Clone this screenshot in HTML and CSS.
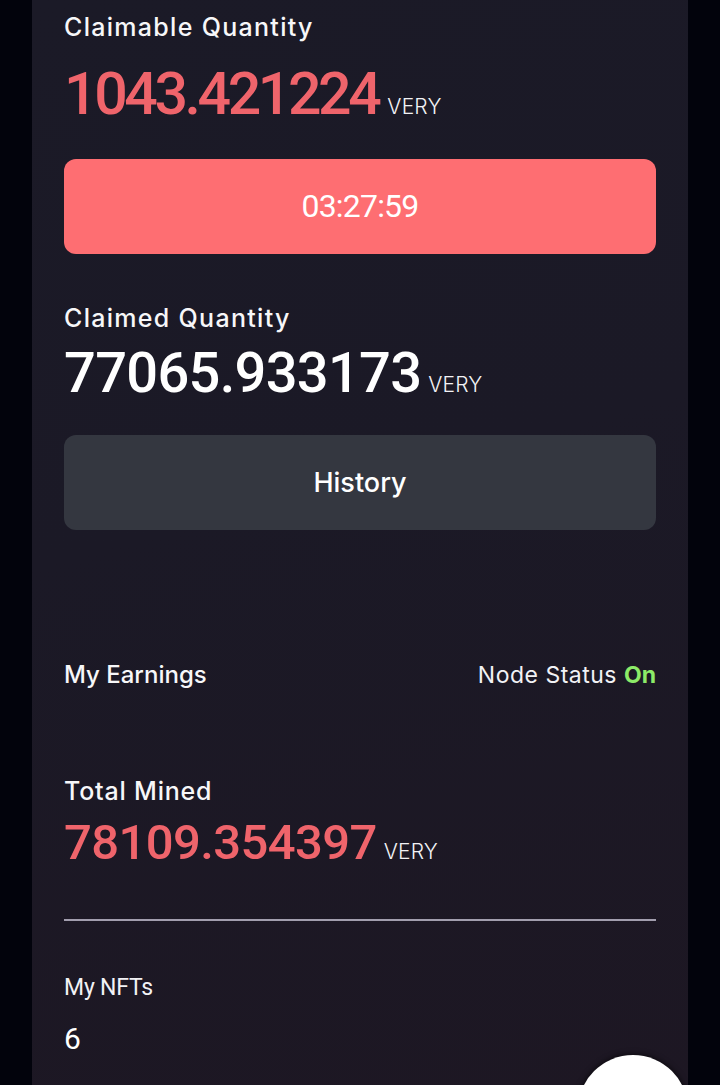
FILE: index.html
```html
<!DOCTYPE html>
<html lang="en">
<head>
<meta charset="utf-8">
<title>Mining</title>
<link rel="stylesheet" href="styles.css">
</head>
<body>
<div class="page">
  <main class="panel">
    <section class="claim">
      <div class="label">Claimable Quantity</div>
      <div class="amount amount-xl red"><span class="num">1043.421224</span><span class="unit">VERY</span></div>
      <button class="btn btn-timer">03:27:59</button>
    </section>

    <section class="claimed">
      <div class="label">Claimed Quantity</div>
      <div class="amount amount-lg white"><span class="num">77065.933173</span><span class="unit">VERY</span></div>
      <button class="btn btn-history">History</button>
    </section>

    <div class="earnings-head">
      <span class="label label-sm">My Earnings</span>
      <span class="status">Node Status <b class="on">On</b></span>
    </div>

    <section class="mined">
      <div class="label label-tight">Total Mined</div>
      <div class="amount amount-md red"><span class="num">78109.354397</span><span class="unit">VERY</span></div>
    </section>

    <hr class="divider">

    <section class="nfts">
      <div class="nft-label">My NFTs</div>
      <div class="nft-count">6</div>
    </section>
  </main>
  <button class="fab" aria-label="menu"></button>
</div>
</body>
</html>
```

FILE: styles.css
```css
* { box-sizing: border-box; }
html, body { margin: 0; padding: 0; }
body {
  background: #02030c;
  color: #ffffff;
  font-family: "Inter", "Liberation Sans", sans-serif;
  height: 1085px;
  overflow: hidden;
}
.page {
  position: relative;
  height: 1085px;
  padding: 0 32px;
  overflow: hidden;
}
.panel {
  height: 1085px;
  background: linear-gradient(165deg, #1b1a27 0%, #1b1926 45%, #1d1723 100%);
  padding: 0 32px;
  display: flex;
  flex-direction: column;
}
.label {
  font-family: "Inter", sans-serif;
  font-weight: 500;
  font-size: 25px;
  line-height: 1;
  letter-spacing: 1.3px;
  color: #f7f7f9;
}
.label-sm { font-size: 24px; letter-spacing: 0; }
.label-tight { letter-spacing: 0.8px; }
.claim { padding-top: 14.6px; display: flex; flex-direction: column; }
.amount {
  display: flex;
  align-items: baseline;
  line-height: 1;
}
.num {
  font-family: "Roboto", sans-serif;
  font-weight: 500;
}
.unit {
  font-family: "Inter", sans-serif;
  font-weight: 300;
  font-size: 21px;
  color: #f2f2f5;
  margin-left: 7px;
  letter-spacing: 0.2px;
}
.red .num { color: #ef646b; }
.white .num { color: #ffffff; }
.amount-xl { margin-top: 24.7px; font-size: 59px; height: 59px; }
.amount-xl .num { letter-spacing: -3.4px; }
.amount-xl .unit { margin-left: 9px; }
.amount-lg { margin-top: 13.4px; font-size: 56px; height: 56px; }
.amount-lg .num { letter-spacing: -0.7px; }
.amount-md { margin-top: 14.5px; font-size: 49px; height: 49px; }
.amount-md .num { letter-spacing: -0.6px; }

.btn {
  display: flex;
  align-items: center;
  justify-content: center;
  width: 100%;
  height: 95px;
  border: none;
  border-radius: 12px;
  color: #ffffff;
  padding: 0;
}
.btn-timer {
  margin-top: 35.7px;
  background: #fe6e72;
  font-family: "Roboto", sans-serif;
  font-weight: 400;
  font-size: 32px;
  letter-spacing: -0.8px;
}
.claimed { margin-top: 52.3px; display: flex; flex-direction: column; }
.btn-history {
  margin-top: 34.5px;
  background: #343740;
  font-family: "Inter", sans-serif;
  font-weight: 500;
  font-size: 27px;
}
.earnings-head {
  margin-top: 133px;
  display: flex;
  justify-content: space-between;
  align-items: baseline;
  line-height: 1;
}
.status {
  font-family: "Inter", sans-serif;
  font-size: 23px;
  font-weight: 400;
  color: #f2f2f5;
  letter-spacing: 0.5px;
}
.on { color: #8ceb68; font-weight: 700; letter-spacing: 0; }
.mined { margin-top: 91.5px; display: flex; flex-direction: column; }
.divider {
  margin: 51.4px 0 0;
  border: none;
  height: 2px;
  background: #a29eae;
}
.nfts { margin-top: 55.3px; }
.nft-label {
  font-family: "Roboto", sans-serif;
  font-size: 23px;
  line-height: 1;
  color: #f2f2f5;
  letter-spacing: -0.2px;
}
.nft-count {
  margin-top: 25.1px;
  font-family: "Roboto", sans-serif;
  font-size: 30px;
  line-height: 1;
  color: #ffffff;
}
.fab {
  position: absolute;
  left: 578px;
  top: 1055px;
  width: 110px;
  height: 110px;
  border-radius: 50%;
  border: none;
  background: #ffffff;
  box-shadow: 0 0 6px rgba(0,0,0,0.8);
}
```
